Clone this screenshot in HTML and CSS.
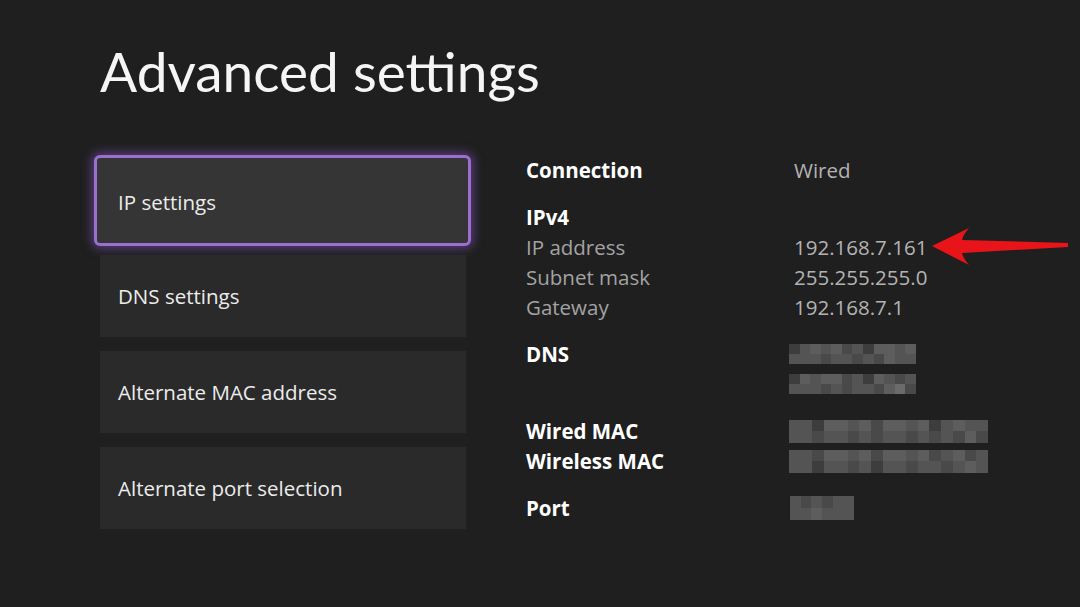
FILE: index.html
```html
<!DOCTYPE html>
<html lang="en">
<head>
<meta charset="utf-8">
<title>Advanced settings</title>
<link rel="stylesheet" href="styles.css">
</head>
<body>
<div class="page">
  <h1 class="title">Advanced settings</h1>
  <div class="main">
    <nav class="menu">
      <div class="item focused">IP settings</div>
      <div class="item">DNS settings</div>
      <div class="item">Alternate MAC address</div>
      <div class="item">Alternate port selection</div>
    </nav>
    <section class="details">
      <div class="group">
        <div class="row"><span class="head">Connection</span><span class="val">Wired</span></div>
      </div>
      <div class="group">
        <div class="row"><span class="head">IPv4</span><span></span></div>
        <div class="row"><span class="sub">IP address</span><span class="val">192.168.7.161</span></div>
        <div class="row"><span class="sub">Subnet mask</span><span class="val">255.255.255.0</span></div>
        <div class="row"><span class="sub">Gateway</span><span class="val">192.168.7.1</span></div>
      </div>
      <div class="group">
        <div class="row"><span class="head">DNS</span>
          <span class="mosaic m-dns">
            <i class="a"></i><i class="c"></i><i class="d"></i><i class="c"></i><i class="d"></i><i class="b"></i><i class="c"></i><i class="a"></i><i class="d"></i><i class="d"></i><i class="c"></i><i class="d"></i>
            <i class="c"></i><i class="c"></i><i class="c"></i><i class="b"></i><i class="c"></i><i class="c"></i><i class="b"></i><i class="c"></i><i class="b"></i><i class="d"></i><i class="c"></i><i class="c"></i>
          </span>
        </div>
        <div class="row"><span></span>
          <span class="mosaic m-dns">
            <i class="a"></i><i class="d"></i><i class="c"></i><i class="d"></i><i class="d"></i><i class="b"></i><i class="c"></i><i class="a"></i><i class="d"></i><i class="c"></i><i class="b"></i><i class="c"></i>
            <i class="c"></i><i class="c"></i><i class="c"></i><i class="b"></i><i class="c"></i><i class="b"></i><i class="c"></i><i class="c"></i><i class="b"></i><i class="d"></i><i class="e"></i><i class="b"></i>
          </span>
        </div>
      </div>
      <div class="group">
        <div class="row"><span class="head">Wired MAC</span>
          <span class="mosaic m-mac">
            <i class="c"></i><i class="c"></i><i class="a"></i><i class="d"></i><i class="d"></i><i class="c"></i><i class="d"></i><i class="b"></i><i class="d"></i><i class="d"></i><i class="c"></i><i class="d"></i><i class="a"></i><i class="c"></i><i class="d"></i><i class="c"></i><i class="c"></i>
            <i class="c"></i><i class="c"></i><i class="b"></i><i class="c"></i><i class="c"></i><i class="b"></i><i class="c"></i><i class="b"></i><i class="c"></i><i class="c"></i><i class="b"></i><i class="c"></i><i class="b"></i><i class="c"></i><i class="b"></i><i class="d"></i><i class="b"></i>
          </span>
        </div>
        <div class="row"><span class="head">Wireless MAC</span>
          <span class="mosaic m-mac">
            <i class="c"></i><i class="c"></i><i class="b"></i><i class="d"></i><i class="d"></i><i class="c"></i><i class="d"></i><i class="b"></i><i class="d"></i><i class="d"></i><i class="c"></i><i class="d"></i><i class="b"></i><i class="c"></i><i class="d"></i><i class="b"></i><i class="c"></i>
            <i class="c"></i><i class="c"></i><i class="a"></i><i class="c"></i><i class="c"></i><i class="b"></i><i class="c"></i><i class="a"></i><i class="c"></i><i class="c"></i><i class="b"></i><i class="c"></i><i class="c"></i><i class="b"></i><i class="c"></i><i class="d"></i><i class="c"></i>
          </span>
        </div>
      </div>
      <div class="group">
        <div class="row"><span class="head">Port</span>
          <span class="mosaic m-port">
            <i class="c"></i><i class="b"></i><i class="c"></i><i class="b"></i><i class="c"></i><i class="c"></i>
            <i class="c"></i><i class="c"></i><i class="d"></i><i class="c"></i><i class="c"></i><i class="c"></i>
          </span>
        </div>
      </div>
    </section>
  </div>
  <svg class="arrow" width="150" height="40" viewBox="920 226 150 40" aria-hidden="true">
    <path d="M932 246 L969 228 Q963 235 962 240 L1068 243 L1068 247 L962 253 Q963 258 969 265 Z" fill="#e8141a"/>
  </svg>
</div>
</body>
</html>
```
FILE: styles.css
```css
html, body {
  margin: 0;
  padding: 0;
  background: #1f1f1f;
}
.page {
  position: relative;
  width: 1080px;
  height: 607px;
  overflow: hidden;
  padding: 0 0 0 100px;
  box-sizing: border-box;
  font-family: "Open Sans", "Noto Sans", sans-serif;
  color: #f2f2f2;
}
.title {
  margin: 0;
  padding-top: 36px;
  height: 155px;
  box-sizing: border-box;
  font-family: Lato, "Open Sans", sans-serif;
  font-weight: 400;
  font-size: 55px;
  line-height: 70px;
  letter-spacing: 0;
  color: #f5f5f5;
}
.main {
  display: flex;
  gap: 60px;
}
.menu {
  width: 366px;
  display: flex;
  flex-direction: column;
  gap: 14px;
  padding-top: 5px;
}
.item {
  height: 82px;
  background: #2a2a2a;
  display: flex;
  align-items: center;
  padding-left: 18px;
  font-size: 20.5px;
  color: #ececec;
}
.item.focused {
  margin: -5px -5px -5px -6px;
  height: 91px;
  box-sizing: border-box;
  padding-left: 21px;
  background: #353535;
  border: 3px solid #9a6fcf;
  border-radius: 6px;
  box-shadow: 0 0 10px 3px rgba(135, 85, 200, 0.5);
  padding-top: 2px;
}
.details {
  display: flex;
  flex-direction: column;
  gap: 17px;
}
.row {
  display: grid;
  grid-template-columns: 268px auto;
  align-items: center;
  height: 30px;
  font-size: 20.5px;
}
.head {
  font-weight: 700;
  color: #ffffff;
}
.sub {
  color: #a3a3a3;
}
.val {
  color: #b3b3b3;
}
.mosaic {
  display: grid;
  grid-template-rows: 1fr 1fr;
  margin-left: -5px;
}
.m-dns {
  width: 127px;
  height: 20px;
  grid-template-columns: repeat(12, 1fr);
}
.m-mac {
  width: 199px;
  height: 23px;
  grid-template-columns: repeat(17, 1fr);
}
.m-port {
  width: 64px;
  height: 24px;
  margin-left: -4px;
  grid-template-columns: repeat(6, 1fr);
}
.mosaic i { display: block; }
.mosaic .a { background: #3d3d3d; }
.mosaic .b { background: #494949; }
.mosaic .c { background: #545454; }
.mosaic .d { background: #5d5d5d; }
.mosaic .e { background: #6b6b6b; }
.arrow {
  position: absolute;
  left: 920px;
  top: 226px;
}
```
